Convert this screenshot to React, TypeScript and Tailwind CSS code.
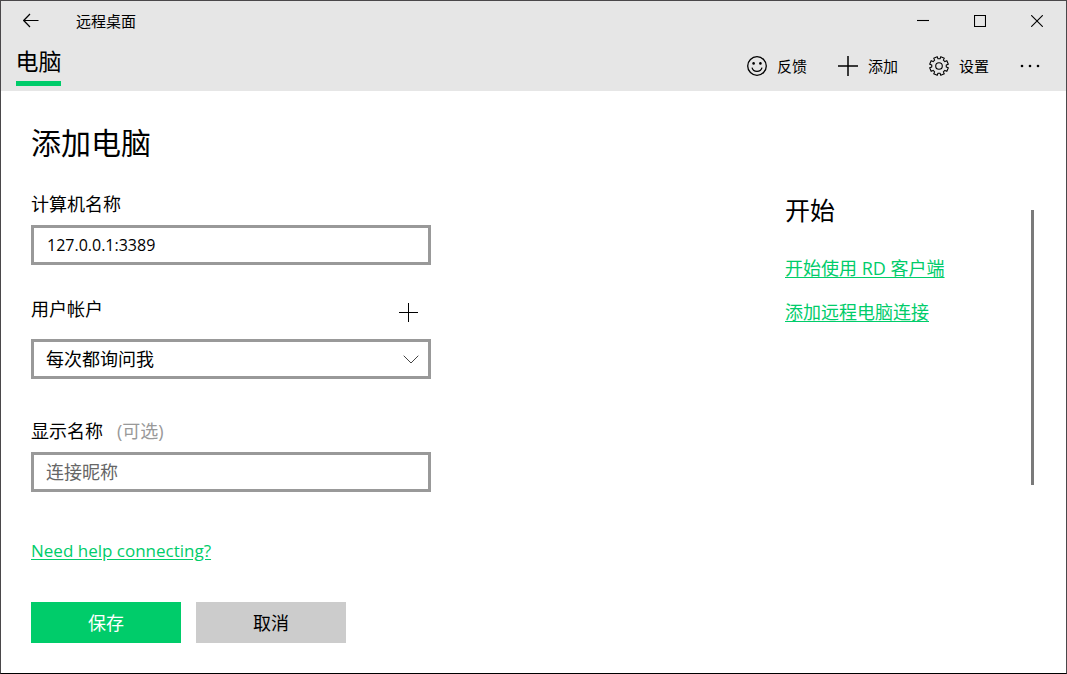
import React, { useState } from 'react';

const fontStack = "font-['Open_Sans','Noto_Sans_CJK_SC',sans-serif]";

const BackIcon = () => (
  <svg className="w-4 h-4" viewBox="0 0 16 16" fill="none" stroke="currentColor" strokeWidth="1.2">
    <path d="M0.5 7.5h15M7 1L0.7 7.5L7 14" />
  </svg>
);

const SmileIcon = () => (
  <svg className="w-5 h-5" viewBox="0 0 20 20" fill="none" stroke="currentColor" strokeWidth="1.3">
    <circle cx="10" cy="10" r="9.3" />
    <path d="M5 11.6a5.2 5.2 0 0 0 10 0" />
    <circle cx="6.6" cy="7.4" r="1.3" fill="currentColor" stroke="none" />
    <circle cx="13.4" cy="7.4" r="1.3" fill="currentColor" stroke="none" />
  </svg>
);

const PlusIcon = () => (
  <svg className="w-5 h-5" viewBox="0 0 20 20" fill="none" stroke="currentColor" strokeWidth="1.5">
    <path d="M10 0v20M0 10h20" />
  </svg>
);

// One tooth of the gear, repeated around the centre
const GearIcon = () => (
  <svg className="w-5 h-5" viewBox="0 0 20 20" fill="none" stroke="currentColor" strokeWidth="1.1" strokeLinejoin="round">
    {[22.5, 67.5, 112.5, 157.5, 202.5, 247.5, 292.5, 337.5].map((angle) => (
      <path key={angle} transform={`rotate(${angle} 10 10)`} d="M7.2 3.3L8.2 2.9L8.1 0.7H11.9L11.8 2.9L12.8 3.3" />
    ))}
    <circle cx="10" cy="10" r="3.3" />
  </svg>
);

const MoreIcon = () => (
  <svg className="w-5 h-5" viewBox="0 0 20 20" fill="currentColor">
    <circle cx="2" cy="10" r="1.3" />
    <circle cx="10" cy="10" r="1.3" />
    <circle cx="18" cy="10" r="1.3" />
  </svg>
);

const windowButtons = [
  { label: '最小化', path: 'M0 5.5h12' },
  { label: '最大化', path: 'M0.5 0.5h11v11h-11z' },
  { label: '关闭', path: 'M0.2 0.2l11.6 11.6M11.8 0.2l-11.6 11.6' },
];

const commands = [
  { label: '反馈', icon: <SmileIcon /> },
  { label: '添加', icon: <PlusIcon /> },
  { label: '设置', icon: <GearIcon /> },
];

const Header: React.FC = () => (
  <header className="bg-[#e6e6e6]">
    <div className="flex h-10 items-center pr-px">
      <button aria-label="返回" className="flex h-10 w-[60px] items-center justify-center">
        <BackIcon />
      </button>
      <span className="ml-[15px] text-[15px] leading-5">远程桌面</span>
      <div className="ml-auto flex">
        {windowButtons.map((btn) => (
          <button key={btn.label} aria-label={btn.label} className="flex h-10 w-[57px] items-center justify-center">
            <svg className="w-3 h-3" viewBox="0 0 12 12" fill="none" stroke="currentColor" strokeWidth="1.1">
              <path d={btn.path} />
            </svg>
          </button>
        ))}
      </div>
    </div>

    <div className="flex h-[50px] items-stretch justify-between pl-[15px] pr-[11px]">
      <nav className="pb-[5px]">
        <a href="#pc" className="flex h-full w-[45px] items-center justify-center whitespace-nowrap border-b-[5px] border-[#00cc6a] text-[23px] leading-8">
          电脑
        </a>
      </nav>
      <div className="flex">
        {commands.map((cmd) => (
          <button key={cmd.label} className="flex w-[91px] items-center gap-[10px] px-[15px] text-[15px] leading-5 whitespace-nowrap">
            {cmd.icon}
            {cmd.label}
          </button>
        ))}
        <button aria-label="更多" className="flex items-center px-[15px]">
          <MoreIcon />
        </button>
      </div>
    </div>
  </header>
);

const AddPcForm: React.FC = () => {
  const [host, setHost] = useState('127.0.0.1:3389');
  const [nickname, setNickname] = useState('');

  return (
    <form className="w-full max-w-[400px]" onSubmit={(e) => e.preventDefault()}>
      <label htmlFor="host" className="block text-lg leading-6">计算机名称</label>
      <input
        id="host"
        type="text"
        value={host}
        onChange={(e) => setHost(e.target.value)}
        className="mt-[9px] block h-10 w-full border-[3px] border-[#999] bg-white px-[13px] text-base leading-6 outline-none"
      />

      <div className="mt-8 flex h-[30px] items-start justify-between">
        <label htmlFor="account" className="text-lg leading-6">用户帐户</label>
        <button type="button" aria-label="添加用户帐户" className="flex h-[30px] w-[45px] items-center justify-center">
          <svg className="w-[19px] h-[19px]" viewBox="0 0 19 19" fill="none" stroke="currentColor">
            <path d="M9.5 0v19M0 9.5h19" />
          </svg>
        </button>
      </div>
      <div className="relative mt-3">
        <select
          id="account"
          className="block h-10 w-full appearance-none border-[3px] border-[#999] bg-white px-3 text-lg leading-6 outline-none"
        >
          <option>每次都询问我</option>
        </select>
        <svg
          className="pointer-events-none absolute right-3 top-4 w-4 h-[9px]"
          viewBox="0 0 16 9"
          fill="none"
          stroke="#444"
        >
          <path d="M0.7 0.7L8 8L15.3 0.7" />
        </svg>
      </div>

      <label htmlFor="nickname" className="mt-10 block text-lg leading-6">
        显示名称<span className="ml-[14px] text-[#999]">(可选)</span>
      </label>
      <input
        id="nickname"
        type="text"
        value={nickname}
        onChange={(e) => setNickname(e.target.value)}
        placeholder="连接昵称"
        className="mt-[9px] block h-10 w-full border-[3px] border-[#999] bg-white px-3 text-lg leading-6 outline-none placeholder:text-[#666]"
      />

      <a href="#help" className="mt-[47px] block w-fit text-[17px] leading-6 text-[#00cc6a] underline underline-offset-2">
        Need help connecting?
      </a>

      <div className="mt-[39px] flex gap-[15px]">
        <button type="submit" className="h-[41px] w-[150px] bg-[#00cc6a] text-lg leading-6 text-white">保存</button>
        <button type="button" className="h-[41px] w-[150px] bg-[#ccc] text-lg leading-6">取消</button>
      </div>
    </form>
  );
};

const GettingStarted: React.FC = () => (
  <aside className="flex w-[249px] shrink-0 items-start justify-between">
    <div>
      <h2 className="text-[25px] leading-9">开始</h2>
      <div className="mt-7 flex flex-col items-start gap-5 text-lg leading-6 text-[#00cc6a]">
        <a href="#start" className="underline underline-offset-2">开始使用 RD 客户端</a>
        <a href="#connect" className="underline underline-offset-2">添加远程电脑连接</a>
      </div>
    </div>
    <div className="mt-[18px] h-[275px] w-[3px] bg-[#7a7a7a]" />
  </aside>
);

export default function App() {
  return (
    <div className={`min-h-screen border border-[#4a484a] border-b-black bg-white text-black ${fontStack}`}>
      <Header />
      <main className="pt-8 pb-[30px] pl-[30px] pr-8">
        <h1 className="text-3xl leading-10">添加电脑</h1>
        <div className="mt-[29px] flex justify-between gap-8">
          <AddPcForm />
          <GettingStarted />
        </div>
      </main>
    </div>
  );
}
